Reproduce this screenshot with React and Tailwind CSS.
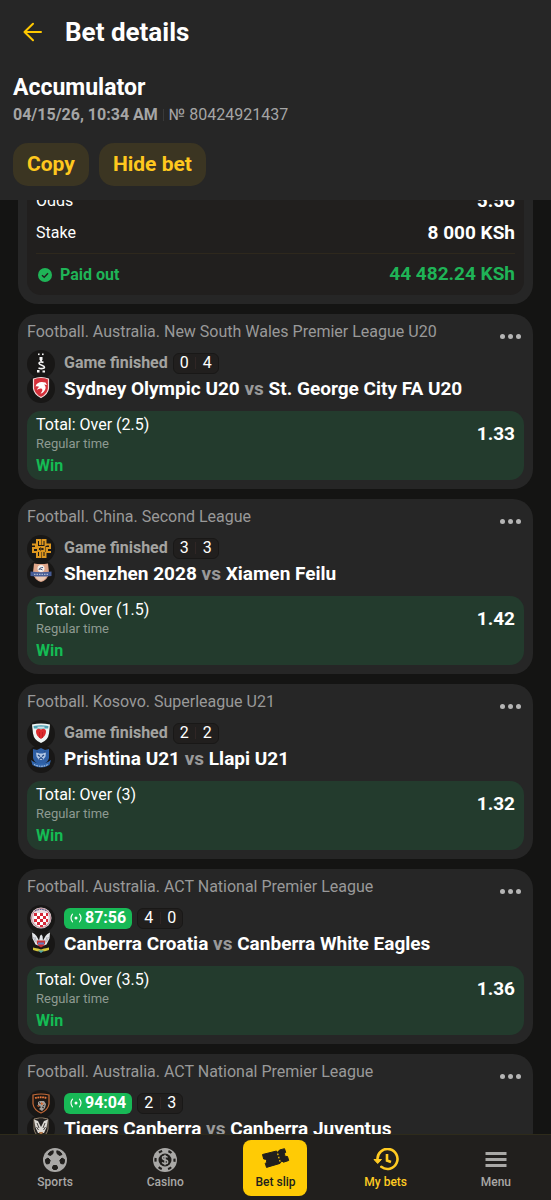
const games = [
  {
    id: 1,
    league: 'Football. Australia. New South Wales Premier League U20',
    score: [0, 4],
    home: 'Sydney Olympic U20',
    away: 'St. George City FA U20',
    homeLogo: SydneyLogo,
    awayLogo: GeorgeLogo,
    market: 'Total: Over (2.5)',
    odds: '1.33',
  },
  {
    id: 2,
    league: 'Football. China. Second League',
    score: [3, 3],
    home: 'Shenzhen 2028',
    away: 'Xiamen Feilu',
    homeLogo: ShenzhenLogo,
    awayLogo: XiamenLogo,
    market: 'Total: Over (1.5)',
    odds: '1.42',
  },
  {
    id: 3,
    league: 'Football. Kosovo. Superleague U21',
    score: [2, 2],
    home: 'Prishtina U21',
    away: 'Llapi U21',
    homeLogo: PrishtinaLogo,
    awayLogo: LlapiLogo,
    market: 'Total: Over (3)',
    odds: '1.32',
  },
  {
    id: 4,
    league: 'Football. Australia. ACT National Premier League',
    time: '87:56',
    score: [4, 0],
    home: 'Canberra Croatia',
    away: 'Canberra White Eagles',
    homeLogo: CroatiaLogo,
    awayLogo: EaglesLogo,
    market: 'Total: Over (3.5)',
    odds: '1.36',
  },
  {
    id: 5,
    league: 'Football. Australia. ACT National Premier League',
    time: '94:04',
    score: [2, 3],
    home: 'Tigers Canberra',
    away: 'Canberra Juventus',
    homeLogo: TigersLogo,
    awayLogo: JuventusLogo,
  },
];

const tabs = [
  { label: 'Sports', icon: BallIcon },
  { label: 'Casino', icon: ChipIcon },
  { label: 'Bet slip', icon: TicketIcon, highlight: true },
  { label: 'My bets', icon: HistoryIcon, active: true },
  { label: 'Menu', icon: MenuIcon },
];

/* team crests, 28x28 */

function SydneyLogo() {
  return (
    <svg viewBox="0 0 28 28" className="w-7 h-7">
      <g fill="#f5f5f5">
        <rect x="11" y="3.5" width="1.6" height="1.6" />
        <rect x="15" y="3.5" width="1.6" height="1.6" />
        <path d="M12.500 7h3v2.500l-.7 1.500h-1.600l-.7-1.500z" />
        <path d="M10 20h2.500v2.500H10zM15.500 20.500h2.500v2h-2.500z" />
      </g>
      <path d="M16.500 12.500c-2-1-4.500-.8-4.500.8 0 2.200 5.500 1.700 5.500 3.900 0 1.600-3.500 1.800-6 .8" fill="none" stroke="#f5f5f5" strokeWidth="1.600" />
    </svg>
  );
}

function GeorgeLogo() {
  return (
    <svg viewBox="0 0 28 28" className="w-7 h-7">
      <path d="M6.500 4q7.500-3 15 0v9.500q-1 6-7.500 9-6.500-3-7.500-9z" fill="#d5303a" stroke="#f1dede" strokeWidth="1.200" />
      <path d="M8.500 11.500c1-4 5-5.500 10-4l1.500 2.500-3-.5c2.500 2 2 5-.5 7.500-1 1-2 1.500-3 1.500 1.500-1.500 2.500-3.500 1.500-4.500-1.500-1-4 0-5 1.300.3-2 1.500-3 2.500-3.300-1.500-.8-2.800-.8-4-.5z" fill="#fff" />
    </svg>
  );
}

function ShenzhenLogo() {
  return (
    <svg viewBox="0 0 28 28" className="w-7 h-7">
      <g fill="none" stroke="#dc961f" strokeWidth="2">
        <path d="M10 11V5h3v5M15.500 10V5h3v6M5 9.500h4v3.500H6v4h5M19 9.500h4v3.500h-3v4h4M11 12h6.500v4H11zM10 17v5h3v-5M15.500 17v5h3v-5" />
      </g>
      <path d="M13 12l3 2-3 2z" fill="#543b14" />
    </svg>
  );
}

function XiamenLogo() {
  return (
    <svg viewBox="0 0 28 28" className="w-7 h-7">
      <path d="M7 3.500q7 1 14 0l1 9q-1 7.500-8 9.500-7-2-8-9.500z" fill="#dfa589" />
      <path d="M8.500 16h11q-1 3.500-5.500 5-4.500-1.500-5.500-5z" fill="#e9c9b5" />
      <path d="M3.500 11.500q10.500 1.500 21 0V16q-10.500 1-21 0z" fill="#465c95" />
      <path d="M7 14.300h14" stroke="#c5cfe3" strokeWidth="1" strokeDasharray="1.500 1" />
      <circle cx="14" cy="8.500" r="3.500" fill="#f3efeb" />
      <path d="M12 10c.3-2 2-2.500 4-2.500M12.500 8.500l3 1.500" stroke="#45557f" fill="none" />
    </svg>
  );
}

function PrishtinaLogo() {
  return (
    <svg viewBox="0 0 28 28" className="w-7 h-7">
      <path d="M5 4.500q9-2 18 0l-1 9q-1 7-8 9.500-7-2.500-8-9.500z" fill="#eef5f5" />
      <path d="M6.500 6q7.500-1.500 15 0l-.3 2.500H6.800z" fill="#4f9fb2" />
      <path d="M14 9.500c-2-1.500-5-1-5 2s1.500 5 5 7.500c3.500-2.500 5-4.500 5-7.500s-3-3.500-5-2z" fill="#dd2b2e" />
      <path d="M12.500 12v6M15.500 12v6" stroke="#b9191d" strokeWidth=".7" />
      <path d="M10.500 7.200h7" stroke="#fff" />
    </svg>
  );
}

function LlapiLogo() {
  return (
    <svg viewBox="0 0 28 28" className="w-7 h-7">
      <path d="M6 4l4 1 4-2 4 2 4-1v9q-1 5-8 7-7-2-8-7z" fill="#2e5fa5" />
      <path d="M9 6.500l3 2h4l3-2-.5 5-2.500 3.500h-4l-2.500-3.500z" fill="#b4c9e6" />
      <path d="M11 10l2 1.500M17 10l-2 1.500M12 14.500l2-2 2 2M10 6v2M18 6v2" stroke="#214987" strokeWidth="1.200" fill="none" />
      <path d="M4 15l3 2q7 3 14 0l3-2-1.500 5q-8.500 5-17 0z" fill="#3166ae" />
      <path d="M7 19.500q7 3.500 14 0" fill="none" stroke="#c9dcf2" strokeDasharray="1.500 1" />
    </svg>
  );
}

function CroatiaLogo() {
  return (
    <svg viewBox="0 0 28 28" className="w-7 h-7">
      <circle cx="14" cy="13" r="10.500" fill="#e6dadd" />
      <circle cx="14" cy="13" r="9.500" fill="none" stroke="#bb8793" strokeWidth="1" />
      <path d="M7 8h14v7q-1 5-7 7.500Q8 20 7 15z" fill="#fff" />
      <path d="M7 8h3v3H7zM13 8h3v3h-3zM19 8h2v3h-2zM10 11h3v3h-3zM16 11h3v3h-3zM7 14h3v3H7zM13 14h3v3h-3zM19 14h2v3h-2zM10 17h3v3h-3zM16 17h3v3h-3zM13 20h3v2h-3z" fill="#d52737" />
      <path d="M8 6q6-3 12 0" fill="none" stroke="#34427c" strokeDasharray="1.500 1" />
    </svg>
  );
}

function EaglesLogo() {
  return (
    <svg viewBox="0 0 28 28" className="w-7 h-7">
      <path d="M5 2.500q3 1 4.500 3.500L12 10.500l1-4.500 1.200-1.500L15.500 6l.5 4.500L18.500 6Q20 3.500 23 2.500l-.5 6-3 6-2.500 1H11l-2.500-1-3-6z" fill="#e3e5e9" />
      <path d="M8 7l2 6M20 7l-2 6M6.500 7l2 5M21.500 7l-2 5" stroke="#9da1aa" strokeWidth=".7" />
      <path d="M10 10.500h8v3q-1 3-4 4-3-1-4-4z" fill="#c93235" />
      <path d="M11 12.500h6v2h-6z" fill="#5f7cc0" />
      <path d="M6 17.500q4 1 5 1l3 1 3-1q1 0 5-1v2.500q-8 3-16 0z" fill="#d3c53a" />
      <path d="M11 20.500h6l-3 2.500z" fill="#4da3a6" />
    </svg>
  );
}

function TigersLogo() {
  return (
    <svg viewBox="0 0 28 28" className="w-7 h-7">
      <path d="M6 5q8-2 16 0v9q-1 6-8 9-7-3-8-9z" fill="#1b1715" stroke="#c56a38" strokeWidth="1.200" />
      <path d="M8 8q6-1.500 12 0" fill="none" stroke="#e8783a" strokeWidth="1.800" strokeDasharray="1.800 .6" />
      <path d="M11 12l2-1h4l2 3-1 4-3 3-3-2 2-2-3-2z" fill="#a5a09c" />
      <path d="M14 12l3 2-3 1zM10 15l3 1-2 1z" fill="#d86931" />
      <path d="M15 17l2 1M12 12.500l1.500 1M17.500 15l-1.500 1" stroke="#27211e" />
    </svg>
  );
}

function JuventusLogo() {
  return (
    <svg viewBox="0 0 28 28" className="w-7 h-7">
      <path d="M7 4l5-1h4l5 1v10q-1 6-7 9-6-3-7-9z" fill="#232120" stroke="#8d7f6b" />
      <path d="M7 4.500l4 1.500 3 6 3-6 4-1.500-1.500 8L17 18h-6l-2.500-5.500z" fill="#dddad5" />
      <path d="M10 8l2 5M18 8l-2 5M9.500 12l2 3M18.500 12l-2 3" stroke="#363230" strokeWidth=".9" />
      <path d="M12 3.500h4L14 9z" fill="#232120" />
      <path d="M12 17h4l-2 5z" fill="#ad7447" />
    </svg>
  );
}

/* bottom bar icons */

function BallIcon() {
  return (
    <svg viewBox="0 0 24 24" className="w-6 h-6">
      <circle cx="12" cy="12" r="12" fill="currentColor" />
      <g fill="#211f1d" stroke="#211f1d" strokeWidth="1" strokeLinejoin="round">
        <path d="M7.500 3.500l2.700-.7-.2 2.700-2.500 2L5 6.500q.8-1.800 2.500-3z" />
        <path d="M16.500 3.500l-2.700-.7.2 2.700 2.500 2 2.500-1q-.8-1.800-2.500-3z" />
        <path d="M2.500 11.500L5 10l2.200 2.300-1 3.200-2.700.5Q2.200 14 2.500 11.500z" />
        <path d="M21.500 11.500L19 10l-2.200 2.300 1 3.200 2.700.5q1.300-2 1-4.500z" />
        <path d="M10.300 17.500h3.400l1 2.500-1.200 1.500h-3L9.300 20z" />
      </g>
    </svg>
  );
}

function ChipIcon() {
  return (
    <svg viewBox="0 0 24 24" className="w-6 h-6">
      <circle cx="12" cy="12" r="12" fill="currentColor" />
      <circle cx="12" cy="12" r="9.500" fill="none" stroke="#211f1d" strokeWidth="2.200" strokeDasharray="3.600 6.348" strokeDashoffset="1.800" />
      <circle cx="12" cy="12" r="6.500" fill="#211f1d" />
      <path d="M14.500 9.500c-.5-1-1.500-1.300-2.500-1.300-3.200 0-3.500 3 0 3.600 3.700.6 3.500 4 0 4-1.300 0-2.300-.5-2.700-1.500M12 6.800v10.400" fill="none" stroke="currentColor" strokeWidth="1.500" />
    </svg>
  );
}

function TicketIcon() {
  return (
    <svg viewBox="0 0 30 24" className="w-[30px] h-6">
      <path
        d="M2.500 6.500L16.500 3l1.200 1.500L19.500 2l5-1.300 1.200 3.600q-1.800 1.200-1 3 .8 1.600 2.800 1.200l1.200 4-5.200 1.700-1.800-1.200-1.700 2.400-13.500 4-1.200-4q2-1.200 1.200-3-.8-1.600-2.800-1.400z"
        fill="currentColor"
        stroke="currentColor"
        strokeLinejoin="round"
      />
      <path d="M17.600 5.500l.5 1.600M18.600 8.800l.5 1.600M19.600 12l.5 1.600" stroke="#ffcb05" strokeWidth="1.200" />
    </svg>
  );
}

function HistoryIcon() {
  return (
    <svg viewBox="0 0 26 24" className="w-[26px] h-6">
      <path d="M4.500 11.500a10 10 0 1 1 3.800 7.300" fill="none" stroke="currentColor" strokeWidth="2.600" strokeLinecap="round" />
      <path d="M1 11.500h7.500l-3.800 4z" fill="currentColor" stroke="currentColor" strokeLinejoin="round" />
      <path d="M14 6v6.500l4 1.500" fill="none" stroke="currentColor" strokeWidth="2.600" />
    </svg>
  );
}

function MenuIcon() {
  return (
    <svg viewBox="0 0 24 24" className="w-6 h-6">
      <path d="M1.500 5.500h21M1.500 11.500h21M1.500 17.500h21" stroke="currentColor" strokeWidth="3.200" />
    </svg>
  );
}

function LiveIcon() {
  return (
    <svg viewBox="0 0 12 10" className="w-3 h-[10px]" fill="none" stroke="currentColor" strokeLinecap="round">
      <circle cx="6" cy="5" r="1.500" fill="currentColor" stroke="none" />
      <path d="M2.500 1.200Q-.5 5 2.500 8.800M9.500 1.200q3 3.800 0 7.600" strokeWidth="1.100" />
    </svg>
  );
}

function Header() {
  return (
    <header className="relative z-10 shrink-0 h-[200px] bg-[#262626] px-[13px]">
      <div className="flex items-center h-16 gap-3 pl-2">
        <button aria-label="Back" className="w-8 h-8 flex items-center pl-[2px] text-[#ffc800]">
          <svg viewBox="0 0 20 20" className="w-5 h-5" fill="none" stroke="currentColor" strokeWidth="2" strokeLinecap="round" strokeLinejoin="round">
            <path d="M18 10H1.500M10 1.700L1.500 10l8.500 8.300" />
          </svg>
        </button>
        <h1 className="text-[26px] leading-8 font-bold">Bet details</h1>
      </div>
      <h2 className="pt-2 text-[23px] leading-8 font-bold">Accumulator</h2>
      <div className="flex items-center h-[22px] text-base text-[#a5a5a5]">
        <span className="font-bold">04/15/26, 10:34 AM</span>
        <span className="w-px h-3 mx-[5px] bg-[#393939]" />
        <span>№ 80424921437</span>
      </div>
      <div className="flex gap-[10px] pt-[17px] text-[21px] font-bold text-[#ffc81e]">
        <button className="h-[43px] px-[14px] rounded-[15px] bg-[#3b3522]">Copy</button>
        <button className="h-[43px] px-[14px] rounded-[15px] bg-[#3b3522]">Hide bet</button>
      </div>
    </header>
  );
}

function Summary() {
  return (
    <section className="-mt-5 rounded-b-[20px] bg-[#262626] px-[9px] pb-[9px]">
      <dl className="rounded-b-[14px] bg-[#211f1e] px-[9px]">
        <div className="flex items-center justify-between h-8 mt-[5px]">
          <dt className="text-base">Odds</dt>
          <dd className="text-[19px] font-bold">5.56</dd>
        </div>
        <div className="flex items-center justify-between h-8">
          <dt className="text-base">Stake</dt>
          <dd className="text-[19px] font-bold">8 000 KSh</dd>
        </div>
        <div className="flex items-center justify-between h-[42px] mt-1 border-t border-[#2e281d] text-[#1fb457]">
          <dt className="flex items-center gap-2 pl-[2px] text-base font-bold">
            <svg viewBox="0 0 14 14" className="w-[14px] h-[14px]">
              <circle cx="7" cy="7" r="7" fill="currentColor" />
              <path d="M4 7.200l2.200 2L10 5.200" fill="none" stroke="#211f1e" strokeWidth="1.500" />
            </svg>
            Paid out
          </dt>
          <dd className="text-[19px] font-bold">44 482.24 KSh</dd>
        </div>
      </dl>
    </section>
  );
}

function GameCard({ game }) {
  const HomeLogo = game.homeLogo;
  const AwayLogo = game.awayLogo;

  return (
    <article className="shrink-0 rounded-[20px] bg-[#262626] px-[9px] pt-2 pb-[9px]">
      <div className="flex items-center justify-between h-5">
        <span className="text-base text-[#999]">{game.league}</span>
        <button aria-label="More" className="flex gap-[3px] pt-2 pr-[3px]">
          {[...Array(3)].map((_, i) => (
            <span key={i} className="w-[5px] h-[5px] rounded-full bg-[#b5b5b5]" />
          ))}
        </button>
      </div>

      <div className="flex gap-[9px] pt-2">
        <div className="flex flex-col">
          <span className="rounded-full bg-[#181716]"><HomeLogo /></span>
          <span className="rounded-full bg-[#181716] -mt-[3px]"><AwayLogo /></span>
        </div>
        <div className="min-w-0">
          <div className="flex items-center gap-[5px] h-[26px]">
            {game.time ? (
              <span className="flex items-center gap-[3px] h-[21px] px-[6px] rounded-md bg-[#18b956] text-base font-bold">
                <LiveIcon />
                {game.time}
              </span>
            ) : (
              <span className="text-base font-bold text-[#a3a3a0]">Game finished</span>
            )}
            <span className="flex items-center justify-between w-[46px] h-[21px] px-[6px] rounded-md border border-[#191817] bg-[#211f1e] text-base">
              <span>{game.score[0]}</span>
              <span className="w-px h-3 bg-[#302625]" />
              <span>{game.score[1]}</span>
            </span>
          </div>
          <h3 className="text-[19px] leading-[26px] font-bold whitespace-nowrap">
            {game.home} <span className="text-[#999]">vs</span> {game.away}
          </h3>
        </div>
      </div>

      {game.market && (
        <div className="flex justify-between mt-2 px-[9px] pt-1 pb-px rounded-[14px] bg-[#233b2d]">
          <div>
            <p className="text-base leading-5">{game.market}</p>
            <p className="text-[13px] leading-[18px] text-[#8e9a91]">Regular time</p>
            <p className="text-base leading-[26px] font-bold text-[#14bc54]">Win</p>
          </div>
          <span className="pt-2 text-[19px] leading-[22px] font-bold">{game.odds}</span>
        </div>
      )}
    </article>
  );
}

function BottomBar() {
  return (
    <nav className="relative z-10 shrink-0 grid grid-cols-5 h-[66px] bg-[#211f1d] border-t border-[#2e2b1b]">
      {tabs.map(({ label, icon: Icon, highlight, active }) => (
        <a
          key={label}
          href="#"
          className={
            highlight
              ? 'justify-self-center flex flex-col items-center w-16 h-14 mt-[5px] pt-2 rounded-lg bg-[#ffcb05] text-[#211f1d]'
              : active
                ? 'flex flex-col items-center pt-[13px] text-[#ffcb22]'
                : 'flex flex-col items-center pt-[13px] text-[#a9a8a6]'
          }
        >
          <Icon />
          <span className="text-xs leading-5 font-medium">{label}</span>
        </a>
      ))}
    </nav>
  );
}

export default function App() {
  return (
    <div className="flex flex-col h-screen bg-[#141413] text-white font-['Roboto',sans-serif]">
      <Header />
      <main className="flex-1 min-h-0 overflow-hidden px-[18px]">
        <div className="flex flex-col gap-[10px]">
          <Summary />
          {games.map((game) => (
            <GameCard key={game.id} game={game} />
          ))}
        </div>
      </main>
      <BottomBar />
    </div>
  );
}
